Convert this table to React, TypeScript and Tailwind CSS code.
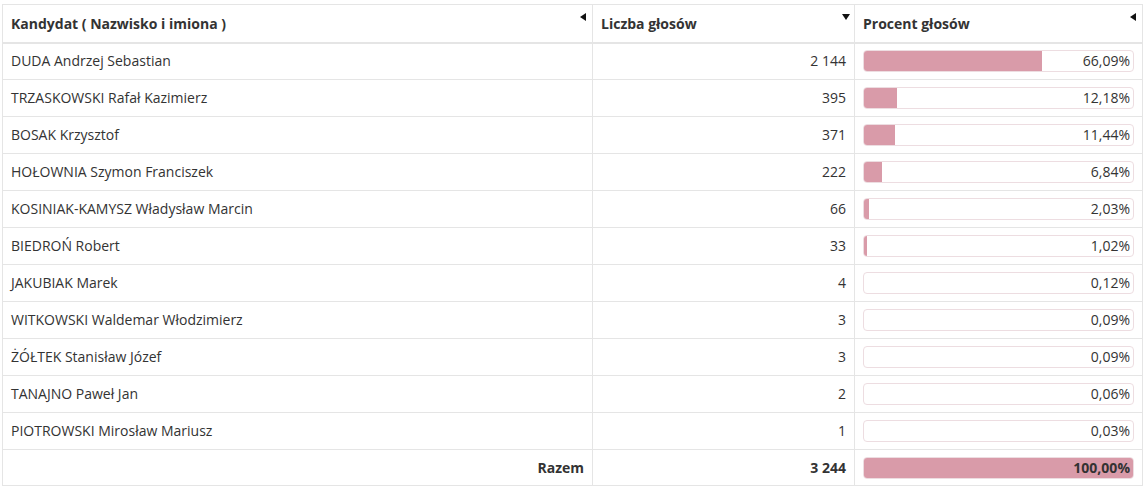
import React from 'react';

interface Candidate {
  name: string;
  votes: string;
  percent: number;
}

const candidates: Candidate[] = [
  { name: 'DUDA Andrzej Sebastian', votes: '2 144', percent: 66.09 },
  { name: 'TRZASKOWSKI Rafał Kazimierz', votes: '395', percent: 12.18 },
  { name: 'BOSAK Krzysztof', votes: '371', percent: 11.44 },
  { name: 'HOŁOWNIA Szymon Franciszek', votes: '222', percent: 6.84 },
  { name: 'KOSINIAK-KAMYSZ Władysław Marcin', votes: '66', percent: 2.03 },
  { name: 'BIEDROŃ Robert', votes: '33', percent: 1.02 },
  { name: 'JAKUBIAK Marek', votes: '4', percent: 0.12 },
  { name: 'WITKOWSKI Waldemar Włodzimierz', votes: '3', percent: 0.09 },
  { name: 'ŻÓŁTEK Stanisław Józef', votes: '3', percent: 0.09 },
  { name: 'TANAJNO Paweł Jan', votes: '2', percent: 0.06 },
  { name: 'PIOTROWSKI Mirosław Mariusz', votes: '1', percent: 0.03 },
];

const fmt = (p: number) => p.toFixed(2).replace('.', ',') + '%';

const SortLeft = () => (
  <svg className="absolute right-[6px] top-[8px] w-[6px] h-[8px]" viewBox="0 0 6 8">
    <path d="M6 0 L0 4 L6 8 Z" fill="#111" />
  </svg>
);

const SortDown = () => (
  <svg className="absolute right-[4px] top-[9px] w-[8px] h-[6px]" viewBox="0 0 8 6">
    <path d="M0 0 L8 0 L4 6 Z" fill="#111" />
  </svg>
);

const Bar: React.FC<{ percent: number; bold?: boolean }> = ({ percent, bold }) => (
  <div className="relative h-[22px] rounded-[4px] border border-[#eddde1] bg-white overflow-hidden">
    {percent >= 0.5 && (
      <div
        className="absolute left-0 top-0 bottom-0 bg-[#d99ba9]"
        style={{ width: `${percent}%` }}
      />
    )}
    <div
      className={`relative text-right pr-[3px] leading-[20px] text-[14px] text-[#333] ${
        bold ? 'font-bold' : ''
      }`}
    >
      {fmt(percent)}
    </div>
  </div>
);

export default function App() {
  return (
    <div
      className="bg-white w-[1147px] h-[490px] pl-[2px] pt-[4px]"
      style={{ fontFamily: '"Open Sans", "Liberation Sans", sans-serif' }}
    >
      <table className="table-fixed border-collapse w-[1140px] text-[14px] text-[#333]">
        <colgroup>
          <col className="w-[590px]" />
          <col className="w-[262px]" />
          <col className="w-[288px]" />
        </colgroup>
        <thead>
          <tr className="h-[38px]">
            <th className="relative border border-[#e5e5e5] border-b-2 text-left font-bold px-[8px]">
              Kandydat ( Nazwisko i imiona )
              <SortLeft />
            </th>
            <th className="relative border border-[#e5e5e5] border-b-2 text-left font-bold px-[8px]">
              Liczba głosów
              <SortDown />
            </th>
            <th className="relative border border-[#e5e5e5] border-b-2 text-left font-bold px-[8px]">
              Procent głosów
              <SortLeft />
            </th>
          </tr>
        </thead>
        <tbody>
          {candidates.map((c, index) => (
            <tr key={index} className="h-[37px]">
              <td className="border border-[#e5e5e5] px-[8px] pb-[1px]">{c.name}</td>
              <td className="border border-[#e5e5e5] px-[8px] pb-[1px] text-right">{c.votes}</td>
              <td className="border border-[#e5e5e5] px-[8px]">
                <Bar percent={c.percent} />
              </td>
            </tr>
          ))}
          {/* Total row */}
          <tr className="h-[36px]">
            <td className="border border-[#e5e5e5] px-[8px] text-right font-bold">Razem</td>
            <td className="border border-[#e5e5e5] px-[8px] text-right font-bold">3 244</td>
            <td className="border border-[#e5e5e5] px-[8px]">
              <Bar percent={100} bold />
            </td>
          </tr>
        </tbody>
      </table>
    </div>
  );
}
